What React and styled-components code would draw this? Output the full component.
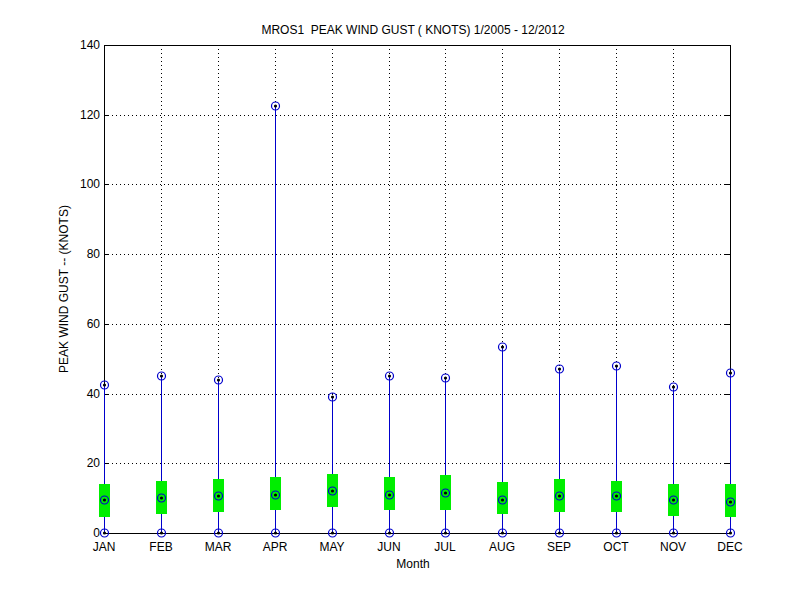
import React from "react";
import styled, { createGlobalStyle } from "styled-components";

const Global = createGlobalStyle`
  html, body { margin: 0; padding: 0; background: #fff; }
`;
const Figure = styled.div`
  width: 800px; height: 600px; background: #fff;
  font-family: "Liberation Sans", Arial, sans-serif;
`;
const Svg = styled.svg`
  display: block;
  text { font-family: "Liberation Sans", Arial, sans-serif; font-size: 12px; fill: #000; white-space: pre; }
`;

const L = 104, R = 730, T = 45, B = 533;
const sy = v => Math.round(B - (v / 140) * (B - T));
const months = ["JAN","FEB","MAR","APR","MAY","JUN","JUL","AUG","SEP","OCT","NOV","DEC"];
const sx = i => Math.round(L + i * (R - L) / 11);
const data = [
  [42.5,14,9.5,4.5],[45,15,10,5.5],[44,15.5,10.5,6],[122.5,16,11,6.5],
  [39,17,12,7.5],[45,16,11,6.5],[44.5,16.5,11.5,6.5],[53.5,14.5,9.5,5.5],
  [47,15.5,10.5,6],[48,15,10.5,6],[42,14,9.5,5],[46,14,9,4.5],
];

const Marker = ({ x, y }) => (
  <g>
    <circle cx={x} cy={y} r={4} fill="none" stroke="#0000cc" strokeWidth={1.2} />
    <circle cx={x} cy={y} r={1.6} fill="#000" />
  </g>
);

export default function App() {
  const yt = [0,20,40,60,80,100,120,140];
  return (
    <Figure>
      <Global />
      <Svg width="800" height="600" shapeRendering="crispEdges">
        {yt.slice(1).map(v => (
          <line key={v} x1={L} x2={R} y1={sy(v)+0.5} y2={sy(v)+0.5} stroke="#000" strokeDasharray="1 3" />
        ))}
        {months.slice(1).map((m,i) => (
          <line key={m} x1={sx(i+1)+0.5} x2={sx(i+1)+0.5} y1={T} y2={B} stroke="#000" strokeDasharray="1 3" />
        ))}
        <rect x={L+0.5} y={T+0.5} width={R-L} height={B-T} fill="none" stroke="#000" />
        {yt.map(v => (
          <g key={v}>
            <line x1={L} x2={L+5} y1={sy(v)+0.5} y2={sy(v)+0.5} stroke="#000" />
            <line x1={R-5} x2={R} y1={sy(v)+0.5} y2={sy(v)+0.5} stroke="#000" />
            <text x={L-4} y={sy(v)+4} textAnchor="end">{v}</text>
          </g>
        ))}
        {months.map((m,i) => (
          <text key={m} x={sx(i)} y={551} textAnchor="middle">{m}</text>
        ))}
        {data.map(([mx,hi,md,lo],i) => {
          const x = sx(i) + 0.5;
          return (
            <g key={i}>
              <line x1={x} x2={x} y1={sy(mx)} y2={sy(0)} stroke="#0000cc" strokeWidth={1} />
              <rect x={x-5.5} y={sy(hi)} width={11} height={sy(lo)-sy(hi)} fill="#00ee00" />
              <g shapeRendering="auto">
                <Marker x={x} y={sy(mx)} />
                <Marker x={x} y={sy(md)} />
                <Marker x={x} y={sy(0)} />
              </g>
            </g>
          );
        })}
        <g shapeRendering="auto">
          <text x={413} y={34} textAnchor="middle">{"MROS1  PEAK WIND GUST ( KNOTS) 1/2005 - 12/2012"}</text>
          <text x={413} y={568} textAnchor="middle">Month</text>
          <text transform="translate(68,289) rotate(-90)" textAnchor="middle">PEAK WIND GUST -- (KNOTS)</text>
        </g>
      </Svg>
    </Figure>
  );
}
